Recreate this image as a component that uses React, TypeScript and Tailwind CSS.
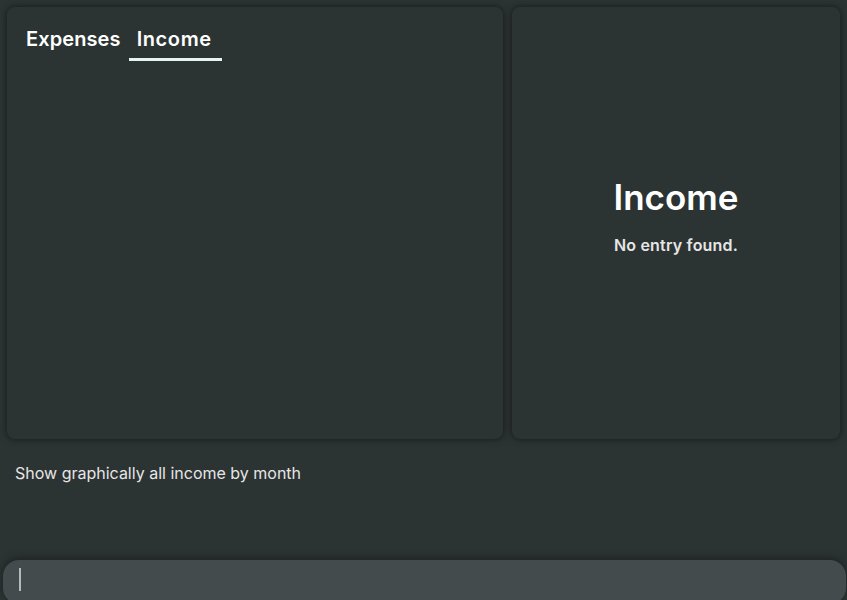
import { useState } from "react";

const App = () => {
  const [tab, setTab] = useState<"expenses" | "income">("income");

  return (
    <div
      className="h-[600px] w-full bg-[#2c3333] flex flex-col overflow-hidden text-white"
      style={{ fontFamily: "Inter, 'Open Sans', sans-serif" }}
    >
      <div className="flex gap-[9px] px-[7px] pt-[7px] h-[440px]">
        <div className="w-[496px] h-[432px] rounded-lg bg-[#2c3333] shadow-[0_0_7px_rgba(0,0,0,0.55)] px-[18px] pt-[17px]">
          <div className="flex">
            <button
              className="px-[1px] pb-[7px] text-[20px] font-semibold leading-[30px] tracking-[0.1px] text-white"
              onClick={() => setTab("expenses")}
            >
              Expenses
            </button>
            <button
              className={
                "ml-[7px] w-[93px] pl-[8px] text-left pb-[4px] text-[20px] font-semibold leading-[30px] tracking-[0.6px] text-white border-b-[3px] " +
                (tab === "income" ? "border-[#e3f4f1]" : "border-transparent")
              }
              onClick={() => setTab("income")}
            >
              Income
            </button>
          </div>
        </div>
        <div className="flex-1 h-[432px] rounded-lg bg-[#2c3333] shadow-[0_0_7px_rgba(0,0,0,0.55)] flex flex-col items-center justify-center pb-[12px]">
          <h2 className="text-[35px] font-semibold leading-[40px] text-white">Income</h2>
          <p className="mt-[16px] text-[16px] leading-[24px] font-semibold tracking-[0.2px] text-[#e6e6e6]">
            No entry found.
          </p>
        </div>
      </div>
      <p className="px-[15px] pt-[23px] text-[16px] leading-[20px] text-[#e6e6e6]">
        Show graphically all income by month
      </p>
      <div className="mt-auto ml-[3px] mr-[1px] h-[44px] -mb-[4px] rounded-[16px] bg-[#434b4d] shadow-[0_-2px_8px_rgba(0,0,0,0.35)] flex items-start pl-[16px] pt-[8px]">
        <div className="w-[2px] h-[23px] bg-[#b3bcbc]" />
      </div>
    </div>
  );
};

export default App;
